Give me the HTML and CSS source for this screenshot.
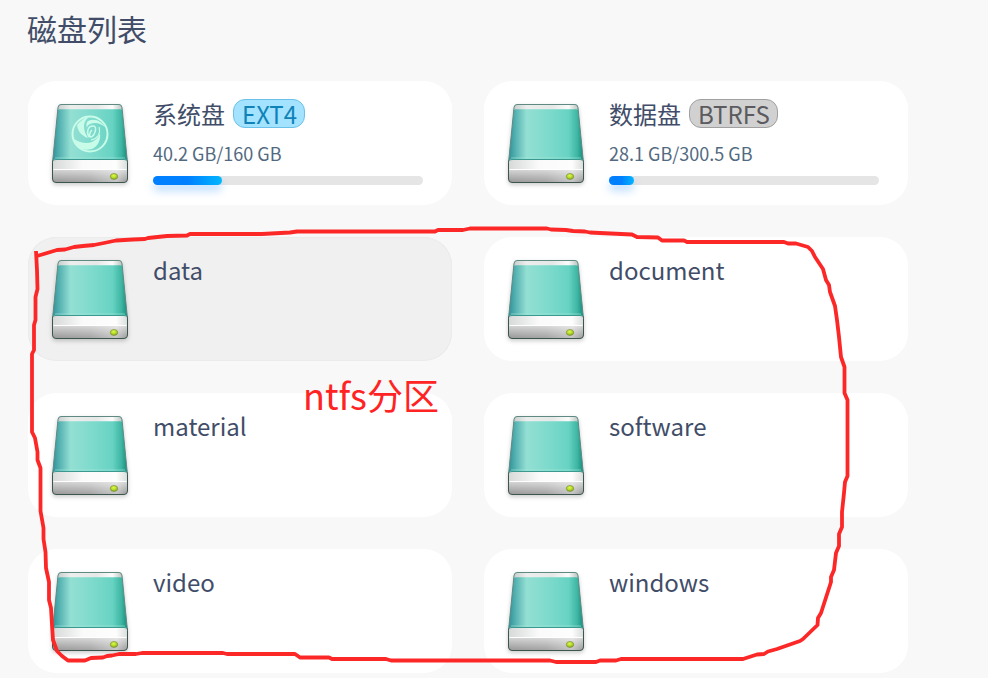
FILE: index.html
```
<!DOCTYPE html>
<html lang="zh-CN">
  <head>
    <meta charset="UTF-8" />
    <meta name="viewport" content="width=device-width, initial-scale=1.0" />
    <title>磁盘列表</title>
    <link rel="stylesheet" href="styles.css" />
  </head>
  <body>
    <!-- shared drive icon -->
    <svg class="defs" width="0" height="0">
      <defs>
        <linearGradient id="lid" x1="0" x2="1" y1="0" y2="0">
          <stop offset="0" stop-color="#2f8f96" />
          <stop offset="0.08" stop-color="#4fadae" />
          <stop offset="0.24" stop-color="#93dfd3" />
          <stop offset="0.5" stop-color="#80dbcd" />
          <stop offset="0.8" stop-color="#68d3c3" />
          <stop offset="0.92" stop-color="#3db5a2" />
          <stop offset="1" stop-color="#17897c" />
        </linearGradient>
        <linearGradient id="top" x1="0" x2="1" y1="0" y2="0">
          <stop offset="0" stop-color="#c9cfcc" />
          <stop offset="0.2" stop-color="#eceeed" />
          <stop offset="0.6" stop-color="#e6e8e7" />
          <stop offset="0.85" stop-color="#fbfbfb" />
          <stop offset="1" stop-color="#bcc4c1" />
        </linearGradient>
        <linearGradient id="shelf" x1="0" x2="1" y1="0" y2="0">
          <stop offset="0" stop-color="#d6d9d8" />
          <stop offset="0.4" stop-color="#f9faf9" />
          <stop offset="0.85" stop-color="#fcfdfc" />
          <stop offset="1" stop-color="#d9dddb" />
        </linearGradient>
        <linearGradient id="front" x1="0" x2="0" y1="0" y2="1">
          <stop offset="0" stop-color="#d6d6d6" />
          <stop offset="1" stop-color="#979797" />
        </linearGradient>
        <linearGradient id="shine" x1="0" x2="1" y1="0" y2="0">
          <stop offset="0" stop-color="#fff" stop-opacity="0" />
          <stop offset="0.5" stop-color="#fff" stop-opacity="0.1" />
          <stop offset="0.85" stop-color="#fff" stop-opacity="0.4" />
          <stop offset="1" stop-color="#fff" stop-opacity="0" />
        </linearGradient>
        <radialGradient id="led" cx="0.45" cy="0.35" r="0.6">
          <stop offset="0" stop-color="#e0fa4a" />
          <stop offset="0.6" stop-color="#b1da28" />
          <stop offset="1" stop-color="#84a422" />
        </radialGradient>
      </defs>
      <symbol id="drive" viewBox="0 0 100 100">
        <path fill="url(#lid)" d="M21 10.5h58q2.5 0 3 3L87.5 68h-75L18 13.500q.5-3 3-3z" />
        <path fill="url(#top)" d="M21 10.500h58q2.500 0 2.700 2.500l.3 3q-.8-.8-2-.8H20q-1.200 0-2 .8l.3-3q.2-2.500 2.700-2.500z" />
        <path fill="none" stroke="#a5e8dc" stroke-width="1" d="M15 64h70" opacity=".6" />
        <path fill="url(#shelf)" d="M15.500 65.500h69q3 0 3 4V78h-75v-8.500q0-4 3-4z" />
        <path fill="url(#front)" d="M12.500 75.500h75V85q0 3.500-3.500 3.500H16q-3.500 0-3.500-3.500z" />
        <path fill="url(#shine)" d="M12.500 75.500h75V85q0 3.500-3.500 3.500H16q-3.500 0-3.500-3.500z" />
        <path fill="none" stroke="#fff" stroke-width="1" d="M13.500 75.500h73" />
        <path fill="none" stroke="#3c9990" stroke-width="1" d="M14 66.500q.5-1 2-1h68q1.500 0 2 1" />
        <path fill="none" stroke="#5f8a82" stroke-width="1" d="M12.700 67 18 13.500q.4-3 3-3h58q2.600 0 3 3L87.300 67" />
        <path fill="none" stroke="#3b554f" stroke-width="1" d="M12.700 66.500Q12.500 68 12.500 70v15q0 3.500 3.500 3.500h68q3.500 0 3.500-3.500V70q0-2-.2-3.500" />
        <ellipse cx="74" cy="82.500" rx="3.700" ry="3" fill="url(#led)" stroke="#85923f" stroke-width=".7" />
      </symbol>
      <symbol id="swirl" viewBox="0 0 40 40">
        <g fill="none" stroke="#c9fbe9">
          <circle cx="20" cy="20" r="17.500" stroke-width="2" />
          <path stroke-width="1.500" d="M19 23c-3-5-1-11 4-11 3 0 3 3 2 6s-3 5-5 5c-1-3 0-5 2-7" />
          <path stroke-width="1.200" d="M21 26c6-1 10-6 8-13" />
        </g>
        <g fill="#c9fbe9">
          <path d="M7 11c3-4 7-7 12-8-4 3-5 6-5 10s2 8 4 11C12 22 8 18 7 11z" />
          <path d="M4 25c6 4 13 5 18 3 4-2 7-5 8-9 1 8-3 14-8 16-5 1-8 1-11 0-3-2-5-5-7-10z" />
          <path d="M18 7c7-3 13 0 17 6-5-4-10-5-15-3-2 1-3 2-3 4-1-3-1-5 1-7z" />
        </g>
      </symbol>
    </svg>

    <h1 class="title">磁盘列表</h1>
    <div class="disks">
      <div class="disk">
        <div class="icon">
          <svg class="drive"><use href="#drive" /></svg>
          <svg class="swirl"><use href="#swirl" /></svg>
        </div>
        <div class="info">
          <div class="name">系统盘 <span class="tag ext4">EXT4</span></div>
          <div class="size">40.2 GB/160 GB</div>
          <div class="bar"><div class="used" style="width: 25.5%"></div></div>
        </div>
      </div>
      <div class="disk">
        <div class="icon"><svg class="drive"><use href="#drive" /></svg></div>
        <div class="info">
          <div class="name">数据盘 <span class="tag btrfs">BTRFS</span></div>
          <div class="size">28.1 GB/300.5 GB</div>
          <div class="bar"><div class="used" style="width: 9.4%"></div></div>
        </div>
      </div>
      <div class="disk hover">
        <div class="icon"><svg class="drive"><use href="#drive" /></svg></div>
        <div class="info"><div class="name">data</div></div>
      </div>
      <div class="disk">
        <div class="icon"><svg class="drive"><use href="#drive" /></svg></div>
        <div class="info"><div class="name">document</div></div>
      </div>
      <div class="disk">
        <div class="icon"><svg class="drive"><use href="#drive" /></svg></div>
        <div class="info"><div class="name">material</div></div>
      </div>
      <div class="disk">
        <div class="icon"><svg class="drive"><use href="#drive" /></svg></div>
        <div class="info"><div class="name">software</div></div>
      </div>
      <div class="disk">
        <div class="icon"><svg class="drive"><use href="#drive" /></svg></div>
        <div class="info"><div class="name">video</div></div>
      </div>
      <div class="disk">
        <div class="icon"><svg class="drive"><use href="#drive" /></svg></div>
        <div class="info"><div class="name">windows</div></div>
      </div>
    </div>

    <!-- hand-drawn outline round the ntfs partitions -->
    <svg class="outline" viewBox="0 0 988 678">
      <polyline points="36,251 37,270 37.500,289 35.500,297 35.500,320 34,325 34,350 32,354 32,432 35,438 37.500,452 37.500,460 40.500,468 40.500,511 43.500,528 43.500,539 45.500,552 46,568 49,582 49,600 51,608 52,625 53,640 57,651 62,656 68,660.500 85,660.500 91,658 103,657.500 107,656 112,655.500 119,654 136,654 142,653 223,653 227,654 295,654 300,657.500 329,657.500 332,659 386,659 391,660.500 550,660.500 556,662 596,662 600,660.500 616,660.500 621,659 743,659 757,654.500 764,654 768,651.500 777,649 800,641 803,639 817.500,625 818,618 821,613 831,582 831,577 834,570 836,553 839,546 839,534 842,527 842,512 844,493 845,482 847.500,476 847.500,400 844.500,393 844.500,367 841,357 839,337 837,320 835,306 830,292 829,285 826,280 823,269 815,257 812,251 808,247 796,243.500 788,243.500 784,242 687,242 684,240.500 662,240.500 658,237.500 637,237 632,234.500 600,233 590,232.500 585,231.500 573,231 566,230 551,229.500 547,228.500 470,228.500 463,230 438,230 435,231.500 297,231.500 290,232.500 262,234 190,234 187,235.500 167,236 148,238 145,239 133,239.500 116,240.500 104,243 94,245 83,246 74,247 65,249.500 57,250 37,256" />
    </svg>
    <div class="note">ntfs分区</div>
  </body>
</html>
```
FILE: styles.css
```
body {
  margin: 0;
  height: 678px;
  overflow: hidden;
  background-color: #f8f8f8;
  color: #414d68;
  font-family: "Noto Sans CJK SC", sans-serif;
}
.defs {
  position: absolute;
}
.title {
  margin: 0;
  padding: 6px 0 0 27px;
  height: 75px;
  font-size: 30px;
  line-height: 44px;
  font-weight: 400;
}
.disks {
  display: grid;
  grid-template-columns: 424px 424px;
  grid-auto-rows: 124px;
  gap: 32px;
  padding-left: 28px;
}
.disk {
  display: flex;
  gap: 13px;
  box-sizing: border-box;
  padding: 13px 29px 0 12px;
  border-radius: 28px;
  background-color: #fff;
}
.disk.hover {
  background-color: #f0f0f0;
  box-shadow: inset 0 0 0 1px #ebebeb;
}
.icon {
  position: relative;
  width: 100px;
  height: 100px;
}
.drive {
  display: block;
  width: 100px;
  height: 100px;
  filter: drop-shadow(0 2px 2px rgba(0, 0, 0, 0.2));
}
.swirl {
  position: absolute;
  left: 30px;
  top: 20px;
  width: 40px;
  height: 40px;
}
.info {
  flex: 1;
}
.name {
  display: flex;
  align-items: center;
  gap: 8px;
  height: 40px;
  font-size: 24px;
  line-height: 36px;
}
.tag {
  box-sizing: border-box;
  height: 29px;
  margin-top: -2px;
  padding: 0 7px 0 8px;
  border: 1px solid;
  border-radius: 12px;
  line-height: 27px;
}
.ext4 {
  background-color: #a3e3ff;
  border-color: #6bc1ea;
  color: #0f83b8;
}
.btrfs {
  background-color: #d1d1d1;
  border-color: #a0a0a0;
  color: #5b5b5f;
}
.size {
  height: 42px;
  color: #526a7f;
  font-size: 18px;
  line-height: 39px;
}
.bar {
  height: 9px;
  border-radius: 5px;
  background-color: #e5e5e5;
}
.used {
  height: 9px;
  border-radius: 5px;
  background: linear-gradient(to right, #0080ff, #0080ff 50%, #00b6ff);
  box-shadow: 0 6px 8px rgba(0, 129, 255, 0.25);
}
.outline {
  position: absolute;
  left: 0;
  top: 0;
  width: 988px;
  height: 678px;
}
.outline polyline {
  fill: none;
  stroke: #fc2828;
  stroke-width: 3.8;
  stroke-linejoin: round;
}
.note {
  position: absolute;
  left: 303px;
  top: 368px;
  color: #ff2323;
  font-size: 36px;
  line-height: 52px;
}
```
